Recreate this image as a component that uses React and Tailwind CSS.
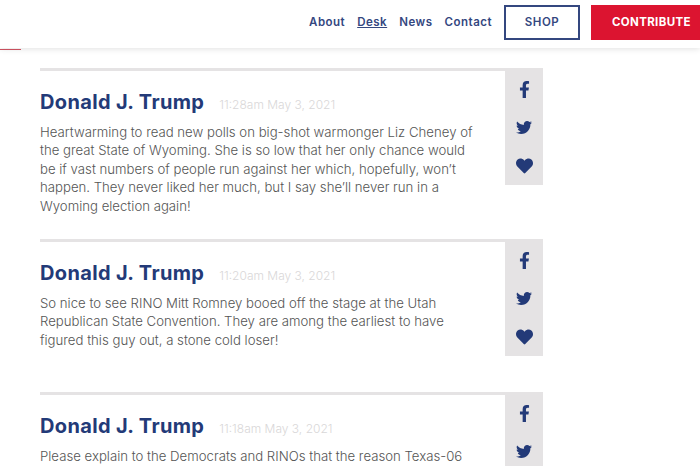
import React from "react";
import { FaFacebookF, FaTwitter, FaHeart } from "react-icons/fa";

const posts = [
  {
    time: "11:28am May 3, 2021",
    cls: "h-[171px]",
    lines: [
      "Heartwarming to read new polls on big-shot warmonger Liz Cheney of",
      "the great State of Wyoming. She is so low that her only chance would",
      "be if vast numbers of people run against her which, hopefully, won’t",
      "happen. They never liked her much, but I say she’ll never run in a",
      "Wyoming election again!",
    ],
  },
  {
    time: "11:20am May 3, 2021",
    cls: "h-[153px]",
    lines: [
      "So nice to see RINO Mitt Romney booed off the stage at the Utah",
      "Republican State Convention. They are among the earliest to have",
      "figured this guy out, a stone cold loser!",
    ],
  },
  {
    time: "11:18am May 3, 2021",
    cls: "h-[153px]",
    lines: ["Please explain to the Democrats and RINOs that the reason Texas-06"],
  },
];

function Post({ time, lines, cls }) {
  return (
    <article className={`w-[503px] border-t-[3px] border-[#e5e3e4] flex ${cls}`}>
      <div className="w-[465px] pt-[18px]">
        <div className="flex items-baseline h-[27px]">
          <h2 className="text-[20px] leading-[27px] font-bold text-[#233a78] tracking-[0.35px] whitespace-nowrap">Donald J. Trump</h2>
          <span className="ml-[15px] text-[12px] font-light text-[#d9d7d8] whitespace-nowrap">{time}</span>
        </div>
        <p className="mt-[7px] text-[13.2px] leading-[18.4px] text-[#555555] whitespace-nowrap font-light">
          {lines.map((l, i) => (
            <span key={i} className="block">{l}</span>
          ))}
        </p>
      </div>
      <div className="w-[38px] h-[114px] bg-[#e5e3e4] flex flex-col items-center pt-[10px] gap-[21px] text-[#233a78]">
        <FaFacebookF className="w-[17px] h-[17px]" />
        <FaTwitter className="w-[16px] h-[17px]" />
        <FaHeart className="w-[17px] h-[18px]" />
      </div>
    </article>
  );
}

export default function App() {
  return (
    <div className="w-[700px] h-[466px] overflow-hidden bg-white font-['Inter','Liberation_Sans',sans-serif] relative">
      <header className="h-[48px] bg-white shadow-[0_1px_6px_rgba(0,0,0,0.12)] flex items-start justify-end pt-[5px] relative">
        <nav className="flex items-center h-[35px] gap-[12px] text-[11.5px] font-semibold text-[#34477f] tracking-[0.5px]">
          <a>About</a>
          <a className="underline">Desk</a>
          <a>News</a>
          <a>Contact</a>
        </nav>
        <a className="ml-[12px] w-[76px] h-[35px] border-2 border-[#34477f] flex items-center justify-center text-[11.5px] font-semibold text-[#34477f] tracking-[0.5px]">SHOP</a>
        <a className="ml-[11px] w-[109px] h-[35px] bg-[#dc1430] flex items-center pl-[21px] text-[11.5px] font-bold text-white tracking-[0.35px] whitespace-nowrap">CONTRIBUTE</a>
        <div className="absolute left-0 top-[49px] w-[21px] h-px bg-[#c8505e]" />
      </header>
      <main className="pl-[40px] pt-[20px]">
        {posts.map((p) => (
          <Post key={p.time} {...p} />
        ))}
      </main>
    </div>
  );
}
